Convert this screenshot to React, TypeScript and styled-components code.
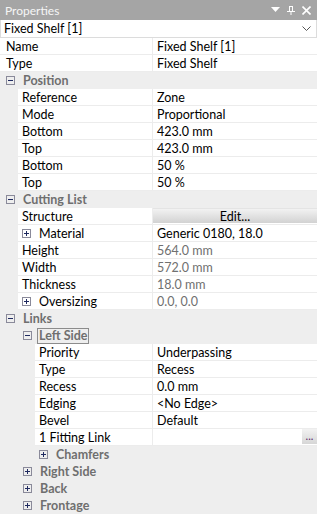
import React from 'react';
import styled, { createGlobalStyle } from 'styled-components';

type Item =
  | { kind: 'cat'; level: number; label: string; open: boolean; focused?: boolean }
  | {
      kind: 'prop';
      level: number;
      label: string;
      value?: string;
      readOnly?: boolean;
      expander?: boolean;
      button?: 'edit' | 'dots';
    };

const items: Item[] = [
  { kind: 'prop', level: 0, label: 'Name', value: 'Fixed Shelf [1]' },
  { kind: 'prop', level: 0, label: 'Type', value: 'Fixed Shelf' },
  { kind: 'cat', level: 0, label: 'Position', open: true },
  { kind: 'prop', level: 1, label: 'Reference', value: 'Zone' },
  { kind: 'prop', level: 1, label: 'Mode', value: 'Proportional' },
  { kind: 'prop', level: 1, label: 'Bottom', value: '423.0 mm' },
  { kind: 'prop', level: 1, label: 'Top', value: '423.0 mm' },
  { kind: 'prop', level: 1, label: 'Bottom', value: '50 %' },
  { kind: 'prop', level: 1, label: 'Top', value: '50 %' },
  { kind: 'cat', level: 0, label: 'Cutting List', open: true },
  { kind: 'prop', level: 1, label: 'Structure', button: 'edit' },
  { kind: 'prop', level: 1, label: 'Material', value: 'Generic 0180, 18.0', expander: true },
  { kind: 'prop', level: 1, label: 'Height', value: '564.0 mm', readOnly: true },
  { kind: 'prop', level: 1, label: 'Width', value: '572.0 mm', readOnly: true },
  { kind: 'prop', level: 1, label: 'Thickness', value: '18.0 mm', readOnly: true },
  { kind: 'prop', level: 1, label: 'Oversizing', value: '0.0, 0.0', readOnly: true, expander: true },
  { kind: 'cat', level: 0, label: 'Links', open: true },
  { kind: 'cat', level: 1, label: 'Left Side', open: true, focused: true },
  { kind: 'prop', level: 2, label: 'Priority', value: 'Underpassing' },
  { kind: 'prop', level: 2, label: 'Type', value: 'Recess' },
  { kind: 'prop', level: 2, label: 'Recess', value: '0.0 mm' },
  { kind: 'prop', level: 2, label: 'Edging', value: '<No Edge>' },
  { kind: 'prop', level: 2, label: 'Bevel', value: 'Default' },
  { kind: 'prop', level: 2, label: '1 Fitting Link', button: 'dots' },
  { kind: 'cat', level: 2, label: 'Chamfers', open: false },
  { kind: 'cat', level: 1, label: 'Right Side', open: false },
  { kind: 'cat', level: 1, label: 'Back', open: false },
  { kind: 'cat', level: 1, label: 'Frontage', open: false },
];

// gutter width per nesting level, and where the value column starts
const gutters = [0, 18, 35];
const SPLIT = 152;

const GlobalStyle = createGlobalStyle`
  body {
    margin: 0;
    background: #eeeeee;
  }
`;

const Panel = styled.div`
  width: 317px;
  height: 514px;
  overflow: hidden;
  background: #eeeeee;
  font-family: Lato, 'Noto Sans', sans-serif;
  font-size: 12.5px;
  color: #000;
`;

const TitleBar = styled.div`
  height: 20px;
  background: #a5a5a5;
  color: #f6f6f6;
  font-size: 12px;
  display: flex;
  align-items: center;
  justify-content: space-between;
  padding: 0 6px 0 5px;
  box-sizing: border-box;
`;

const TitleIcons = styled.div`
  display: flex;
  align-items: center;
  gap: 7px;
`;

const Combo = styled.div`
  height: 18px;
  background: #ffffff;
  border: 1px solid #dcdcdc;
  border-top: none;
  box-sizing: border-box;
  display: flex;
  align-items: center;
  justify-content: space-between;
  padding: 0 5px 0 3px;
`;

const Row = styled.div<{ $cat?: boolean }>`
  height: 17px;
  display: flex;
  background: ${({ $cat }) => ($cat ? '#eeeeee' : 'transparent')};
`;

const Gutter = styled.div<{ $w: number }>`
  width: ${({ $w }) => $w}px;
  flex: none;
  background: #eeeeee;
`;

const LabelCell = styled.div<{ $w: number; $pad: number }>`
  width: ${({ $w }) => $w}px;
  flex: none;
  box-sizing: border-box;
  background: #ffffff;
  border-bottom: 1px solid #ececec;
  border-right: 1px solid #ececec;
  display: flex;
  align-items: center;
  padding-left: ${({ $pad }) => $pad}px;
  white-space: nowrap;
  overflow: hidden;
`;

const ValueCell = styled.div<{ $readOnly?: boolean }>`
  flex: 1;
  background: #ffffff;
  border-bottom: 1px solid #ececec;
  display: flex;
  align-items: center;
  padding-left: 4px;
  color: ${({ $readOnly }) => ($readOnly ? '#707070' : '#000')};
  white-space: nowrap;
  position: relative;
`;

const CatLabel = styled.div<{ $focused?: boolean }>`
  color: #6f6f6f;
  font-weight: bold;
  line-height: 14px;
  padding: 0 1px;
  margin-left: ${({ $focused }) => ($focused ? '5px' : '6px')};
  border: 1px solid ${({ $focused }) => ($focused ? '#8c8c8c' : 'transparent')};
`;

const CatRow = styled.div<{ $x: number }>`
  display: flex;
  align-items: center;
  padding-left: ${({ $x }) => $x}px;
`;

const Box = styled.span`
  width: 9px;
  height: 9px;
  box-sizing: border-box;
  border: 1px solid #8a8a9a;
  position: relative;
  flex: none;
  &::before {
    content: '';
    position: absolute;
    left: 1px;
    right: 1px;
    top: 3px;
    height: 1px;
    background: #1f2a60;
  }
`;

const PlusBox = styled(Box)`
  &::after {
    content: '';
    position: absolute;
    top: 1px;
    bottom: 1px;
    left: 3px;
    width: 1px;
    background: #1f2a60;
  }
`;

const EditButton = styled.div`
  position: absolute;
  inset: 0 0 1px 0;
  background: linear-gradient(#f2f2f2, #d2d2d2);
  border-top: 1px solid #e4e4e4;
  display: flex;
  align-items: center;
  justify-content: center;
`;

const DotsButton = styled.div`
  position: absolute;
  right: 0;
  top: 0;
  bottom: 1px;
  width: 15px;
  background: linear-gradient(#f2f2f2, #d6d6d6);
  display: flex;
  align-items: center;
  justify-content: center;
  color: #5a2a6a;
  font-size: 11px;
  line-height: 1;
  padding-bottom: 3px;
  box-sizing: border-box;
`;

const ExpanderGap = styled.span`
  width: 8px;
  flex: none;
`;

const Toggle = ({ open }: { open: boolean }) => (open ? <Box /> : <PlusBox />);

const PropertyRow = ({ item }: { item: Item }) => {
  const g = gutters[item.level];
  if (item.kind === 'cat') {
    return (
      <Row $cat>
        <CatRow $x={g + (item.level === 2 ? 4 : item.level === 1 ? 5 : 6)}>
          <Toggle open={item.open} />
          <CatLabel $focused={item.focused}>{item.label}</CatLabel>
        </CatRow>
      </Row>
    );
  }
  return (
    <Row>
      <Gutter $w={g} />
      <LabelCell $w={SPLIT + 1 - g} $pad={item.level === 0 ? 6 : 4}>
        {item.expander && (
          <>
            <PlusBox />
            <ExpanderGap />
          </>
        )}
        {item.label}
      </LabelCell>
      <ValueCell $readOnly={item.readOnly}>
        {item.value}
        {item.button === 'edit' && <EditButton>Edit...</EditButton>}
        {item.button === 'dots' && <DotsButton>...</DotsButton>}
      </ValueCell>
    </Row>
  );
};

export default function App() {
  return (
    <Panel>
      <GlobalStyle />
      <TitleBar>
        <span>Properties</span>
        <TitleIcons>
          <svg width="9" height="6" viewBox="0 0 9 6">
            <path d="M0 0 H9 L4.5 5 Z" fill="#fff" />
          </svg>
          <svg width="8" height="9" viewBox="0 0 8 9">
            <path d="M2 0.5 H6 M2.5 0.5 V5 M5.5 0.5 V5 M0 5.5 H8 M4 5.5 V9" stroke="#fff" strokeWidth="1" fill="none" />
          </svg>
          <svg width="9" height="9" viewBox="0 0 9 9">
            <path d="M0.5 0.5 L8.5 8.5 M8.5 0.5 L0.5 8.5" stroke="#fff" strokeWidth="1.6" />
          </svg>
        </TitleIcons>
      </TitleBar>
      <Combo>
        <span>Fixed Shelf [1]</span>
        <svg width="9" height="5" viewBox="0 0 9 5">
          <path d="M0.5 0.5 L4.5 4.5 L8.5 0.5" stroke="#555" strokeWidth="1" fill="none" />
        </svg>
      </Combo>
      {items.map((item, i) => (
        <PropertyRow key={i} item={item} />
      ))}
    </Panel>
  );
}
